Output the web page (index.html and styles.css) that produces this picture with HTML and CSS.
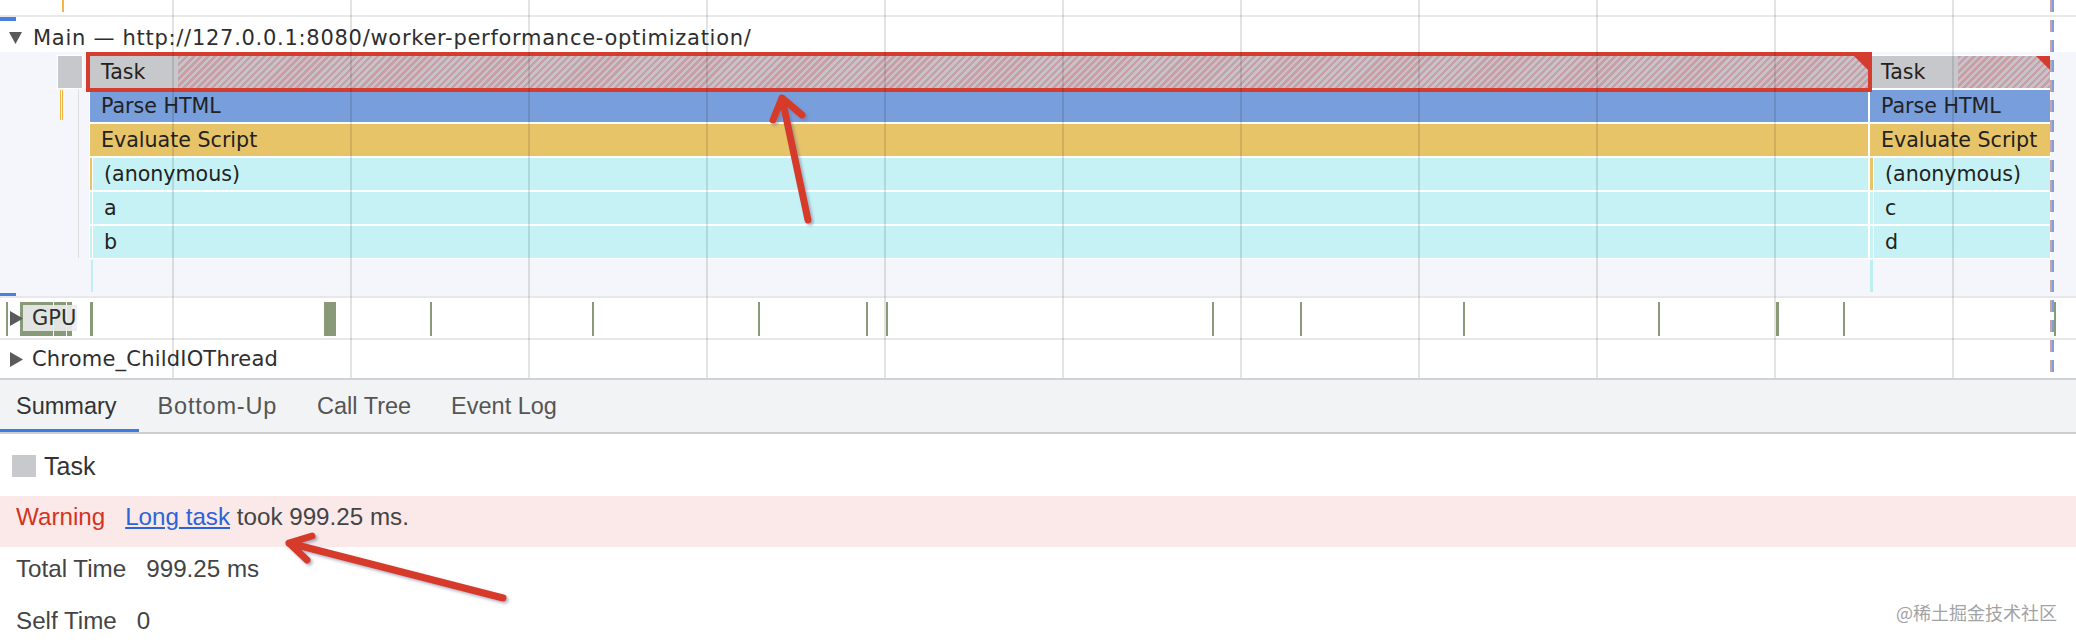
FILE: index.html
```html
<!DOCTYPE html>
<html lang="en">
<head>
<meta charset="utf-8">
<title>Performance - Long task</title>
<link rel="stylesheet" href="styles.css">
</head>
<body>
<div class="page">
  <div class="timeline">
    <div class="top-strip">
      <span class="bar-tick" style="left:62px"></span>
    </div>
    <div class="sep"></div>
    <div class="track-head main-head">
      <span class="sel-mark"></span>
      <svg class="tri-down" viewBox="0 0 13 12"><polygon points="0,0 13,0 6.5,12"/></svg>
      <span class="head-text url">Main — http://127.0.0.1:8080/worker-performance-optimization/</span>
    </div>
    <div class="flame">
      <span class="line-thin orange" style="left:60px;top:38px;height:30px"></span>
      <span class="line-thin orange" style="left:62px;top:38px;height:30px"></span>
      <span class="line-thin grey" style="left:78px;top:38px;height:168px"></span>

      <div class="bar task-plain" style="left:57px;top:3px;width:26px"></div>

      <div class="bar task" style="left:89px;top:3px;width:1780px">Task<span class="corner"></span></div>
      <div class="bar task" style="left:1869px;top:3px;width:182px">Task<span class="corner"></span></div>

      <div class="bar parse" style="left:89px;top:37px;width:1780px">Parse HTML</div>
      <div class="bar parse" style="left:1869px;top:37px;width:182px">Parse HTML</div>

      <div class="bar eval" style="left:89px;top:71px;width:1780px">Evaluate Script</div>
      <div class="bar eval" style="left:1869px;top:71px;width:182px">Evaluate Script</div>

      <div class="bar eval" style="left:89px;top:105px;width:4px"></div>
      <div class="bar fn" style="left:92px;top:105px;width:1777px">(anonymous)</div>
      <div class="bar eval" style="left:1869px;top:105px;width:5px"></div>
      <div class="bar fn" style="left:1873px;top:105px;width:178px">(anonymous)</div>

      <div class="bar fn" style="left:89px;top:139px;width:4px"></div>
      <div class="bar fn" style="left:92px;top:139px;width:1777px">a</div>
      <div class="bar fn" style="left:1869px;top:139px;width:5px"></div>
      <div class="bar fn" style="left:1873px;top:139px;width:178px">c</div>

      <div class="bar fn" style="left:89px;top:173px;width:4px"></div>
      <div class="bar fn" style="left:92px;top:173px;width:1777px">b</div>
      <div class="bar fn" style="left:1869px;top:173px;width:5px"></div>
      <div class="bar fn" style="left:1873px;top:173px;width:178px">d</div>

      <span class="line-thin cyan" style="left:91px;top:208px;height:32px;width:2px"></span>
      <span class="line-thin cyan" style="left:1870px;top:208px;height:32px;width:3px"></span>

      <div class="task-highlight"></div>
      <span class="sel-mark bottom"></span>
    </div>
    <div class="sep"></div>
    <div class="track-head gpu-head">
      <span class="gpu-bar" style="left:6px;width:2px"></span>
      <span class="gpu-bar" style="left:20px;width:33px"></span>
      <span class="gpu-bar" style="left:54px;width:12px"></span>
      <span class="gpu-bar" style="left:67px;width:5px"></span>
      <span class="gpu-bar" style="left:90px;width:3px"></span>
      <span class="gpu-bar" style="left:324px;width:12px"></span>
      <span class="gpu-bar" style="left:430px;width:2px"></span>
      <span class="gpu-bar" style="left:592px;width:2px"></span>
      <span class="gpu-bar" style="left:758px;width:2px"></span>
      <span class="gpu-bar" style="left:866px;width:2px"></span>
      <span class="gpu-bar" style="left:886px;width:2px"></span>
      <span class="gpu-bar" style="left:1212px;width:2px"></span>
      <span class="gpu-bar" style="left:1300px;width:2px"></span>
      <span class="gpu-bar" style="left:1463px;width:2px"></span>
      <span class="gpu-bar" style="left:1658px;width:2px"></span>
      <span class="gpu-bar" style="left:1776px;width:3px"></span>
      <span class="gpu-bar" style="left:1843px;width:2px"></span>
      <span class="gpu-bar" style="left:2054px;width:2px"></span>
      <svg class="tri-right" viewBox="0 0 13 15"><polygon points="0,0 13,7.5 0,15"/></svg>
      <span class="gpu-label">GPU</span>
    </div>
    <div class="sep"></div>
    <div class="track-head io-head">
      <svg class="tri-right" viewBox="0 0 13 15"><polygon points="0,0 13,7.5 0,15"/></svg>
      <span class="head-text">Chrome_ChildIOThread</span>
    </div>
    <div class="grid"></div>
    <div class="cursor-line"></div>
  </div>

  <div class="tabs">
    <div class="tab active">Summary</div>
    <div class="tab wide">Bottom-Up</div>
    <div class="tab">Call Tree</div>
    <div class="tab">Event Log</div>
  </div>

  <div class="summary">
    <div class="sum-title"><span class="swatch"></span><span>Task</span></div>
    <div class="sum-row warn"><span class="label warn-label">Warning</span><span><a class="link" href="#">Long task</a> took 999.25 ms.</span></div>
    <div class="sum-row"><span class="label">Total Time</span><span>999.25 ms</span></div>
    <div class="sum-row"><span class="label">Self Time</span><span>0</span></div>
  </div>

  <svg class="arrows" viewBox="0 0 2076 642" width="2076" height="642">
    <defs>
      <filter id="sh" x="-20%" y="-20%" width="140%" height="140%">
        <feDropShadow dx="2" dy="2" stdDeviation="1.6" flood-color="#6d6f92" flood-opacity="0.55"/>
      </filter>
    </defs>
    <path d="M808,220 L782,98 M773,120 L782,98 L802,115" filter="url(#sh)"/>
    <path d="M503,598 L289,543 M312,536 L289,543 L307,560" filter="url(#sh)"/>
  </svg>

  <div class="watermark">@稀土掘金技术社区</div>
</div>
</body>
</html>
```

FILE: styles.css
```css
* { box-sizing: border-box; }

body {
  margin: 0;
  background: #fff;
  font-family: "DejaVu Sans", sans-serif;
}

.page {
  position: relative;
  width: 2076px;
  height: 642px;
  overflow: hidden;
  background: #fff;
}

/* ---------- timeline ---------- */
.timeline {
  position: relative;
  height: 378px;
}

.top-strip {
  position: relative;
  height: 15px;
}

.bar-tick {
  position: absolute;
  top: 0;
  width: 2px;
  height: 12px;
  background: #f0b64a;
}

.sep {
  height: 2px;
  background: #e8e8e8;
}

.track-head {
  position: relative;
  display: flex;
  color: #2e2e2e;
  font-size: 21px;
  white-space: nowrap;
}

.head-text { display: block; }

.head-text.url { letter-spacing: 0.72px; }

.main-head {
  height: 35px;
  padding: 8px 0 0 9px;
  align-items: flex-start;
  line-height: 27px;
}

.tri-down {
  width: 13px;
  height: 12px;
  margin: 7px 11px 0 0;
  fill: #5a5a5a;
  flex: none;
}

.tri-right {
  position: relative;
  z-index: 2;
  width: 13px;
  height: 15px;
  fill: #5a5a5a;
  flex: none;
}

.sel-mark {
  position: absolute;
  left: 0;
  top: 0;
  width: 16px;
  height: 4px;
  background: #4a7fe0;
}

.sel-mark.bottom {
  top: auto;
  bottom: 0;
  height: 3px;
}

/* flame chart canvas */
.flame {
  position: relative;
  height: 244px;
  background: #f5f6fb;
}

.bar {
  position: absolute;
  height: 34px;
  border: 1px solid #fff;
  padding-left: 11px;
  line-height: 32px;
  font-size: 20.6px;
  color: #222;
  white-space: nowrap;
  overflow: hidden;
}

.task-plain { background: #c7c8cb; }

.task {
  background:
    linear-gradient(to right, #c7c8cb 0 88px, transparent 88px),
    repeating-linear-gradient(135deg, #c6c4ca 0 2.5px, #c99ea5 2.5px 5px);
}

.corner {
  position: absolute;
  top: 0;
  right: 0;
  width: 0;
  height: 0;
  border-top: 14px solid #d43c30;
  border-left: 14px solid transparent;
}

.parse { background: #789edc; }
.eval  { background: #e7c468; }
.fn    { background: #c6f2f5; }

.line-thin {
  position: absolute;
  width: 1px;
}
.line-thin.orange { background: #ebb443; }
.line-thin.grey   { background: #dedede; }
.line-thin.cyan   { background: #bdeef2; }

.task-highlight {
  position: absolute;
  left: 86px;
  top: 0;
  width: 1786px;
  height: 40px;
  border: 4px solid #d43c30;
}

/* GPU + IO tracks */
.gpu-head {
  height: 40px;
  padding-left: 10px;
  align-items: center;
  line-height: 40px;
}

.gpu-bar {
  position: absolute;
  top: 4px;
  height: 34px;
  background: #889a78;
}

.gpu-label {
  position: relative;
  z-index: 2;
  height: 26px;
  line-height: 26px;
  padding: 0 1px 0 9px;
  background: rgba(236, 236, 236, 0.9);
}

.io-head {
  height: 38px;
  padding-left: 10px;
  align-items: center;
  line-height: 38px;
}

.io-head .head-text { margin-left: 9px; letter-spacing: 0.2px; }

.grid {
  position: absolute;
  left: 0;
  top: 0;
  width: 100%;
  height: 100%;
  pointer-events: none;
  background: repeating-linear-gradient(to right,
    transparent 0 172px,
    rgba(0, 0, 0, 0.11) 172px 174px,
    transparent 174px 178px);
}

.cursor-line {
  position: absolute;
  left: 2050px;
  top: 0;
  width: 4px;
  height: 100%;
  background:
    repeating-linear-gradient(to bottom, #7f9fdc 0 12px, transparent 12px 20px) 2px 0 / 2px 100% no-repeat,
    repeating-linear-gradient(to bottom, #c9a3ab 0 12px, transparent 12px 20px) 0 0 / 2px 100% no-repeat;
}

/* ---------- tabs ---------- */
.tabs {
  display: flex;
  height: 56px;
  background: #f2f3f4;
  border-top: 2px solid #d0d2d5;
  border-bottom: 2px solid #cbcdd1;
  font-family: "Liberation Sans", Arial, sans-serif;
  font-size: 23.5px;
}

.tab {
  height: 52px;
  line-height: 52px;
  padding: 0 21px 0 19px;
  color: #555;
}

.tab.active {
  padding-left: 16px;
  padding-right: 22px;
  color: #333;
  box-shadow: inset 0 -3px 0 #3d7be0;
}

.tab.wide { letter-spacing: 0.8px; }

/* ---------- summary ---------- */
.summary {
  font-family: "Liberation Sans", Arial, sans-serif;
  font-size: 24.2px;
  color: #444;
}

.sum-title {
  display: flex;
  align-items: center;
  gap: 8px;
  height: 62px;
  padding: 18px 0 16px 12px;
  font-size: 25px;
  line-height: 28px;
  color: #333;
}

.swatch {
  width: 24px;
  height: 22px;
  background: #c8c9cc;
}

.sum-row {
  display: flex;
  gap: 20px;
  height: 52px;
  padding: 8px 16px 17px;
  line-height: 27px;
}

.sum-row.warn {
  height: 51px;
  padding-top: 7px;
  background: #fbe9ea;
}

.warn-label { color: #d4341f; }

.link {
  color: #2a64d8;
  text-decoration: underline;
}

/* ---------- overlays ---------- */
.arrows {
  position: absolute;
  left: 0;
  top: 0;
  pointer-events: none;
  fill: none;
  stroke: #d63b2c;
  stroke-width: 7;
  stroke-linecap: round;
  stroke-linejoin: round;
}

.watermark {
  position: absolute;
  right: 19px;
  top: 600px;
  font-family: "Noto Sans CJK SC", sans-serif;
  font-size: 18px;
  line-height: 24px;
  color: #a3a3a3;
  text-shadow: 0 0 1px #fff, 1px 1px 0 #fff;
}
```
